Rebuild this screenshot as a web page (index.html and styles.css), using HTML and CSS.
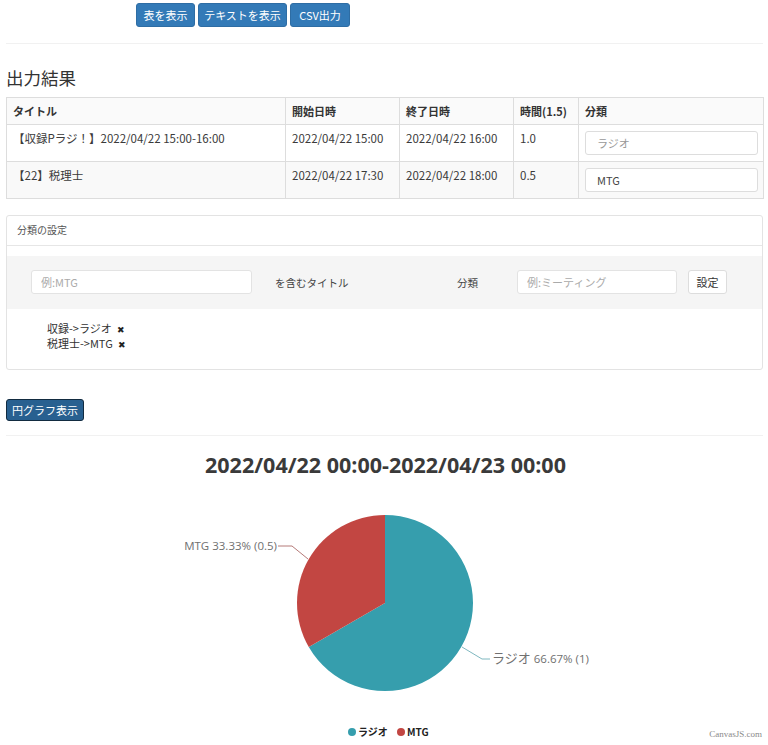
FILE: index.html
```html
<!DOCTYPE html>
<html lang="ja">
<head>
<meta charset="utf-8">
<title>出力結果</title>
<link rel="stylesheet" href="styles.css">
</head>
<body>
<div class="page">
  <div class="toolbar">
    <button class="btn btn-primary b-table">表を表示</button>
    <button class="btn btn-primary b-text">テキストを表示</button>
    <button class="btn btn-primary b-csv">CSV出力</button>
  </div>
  <hr class="rule">
  <h3 class="heading">出力結果</h3>
  <table class="result">
    <thead>
      <tr>
        <th class="c-title">タイトル</th>
        <th class="c-start">開始日時</th>
        <th class="c-end">終了日時</th>
        <th class="c-time">時間(1.5)</th>
        <th class="c-cat">分類</th>
      </tr>
    </thead>
    <tbody>
      <tr>
        <td>【収録Pラジ！】2022/04/22 15:00-16:00</td>
        <td>2022/04/22 15:00</td>
        <td>2022/04/22 16:00</td>
        <td>1.0</td>
        <td><input class="cell-input" type="text" placeholder="ラジオ"></td>
      </tr>
      <tr class="striped">
        <td>【22】税理士</td>
        <td>2022/04/22 17:30</td>
        <td>2022/04/22 18:00</td>
        <td>0.5</td>
        <td><input class="cell-input" type="text" value="MTG"></td>
      </tr>
    </tbody>
  </table>

  <div class="panel">
    <div class="panel-heading">分類の設定</div>
    <div class="panel-body">
      <div class="band">
        <input class="band-input key" type="text" placeholder="例:MTG">
        <span class="band-label contains">を含むタイトル</span>
        <span class="band-label cat">分類</span>
        <input class="band-input val" type="text" placeholder="例:ミーティング">
        <button class="btn btn-default">設定</button>
      </div>
      <ul class="rules">
        <li>収録-&gt;ラジオ <span class="x">✖</span></li>
        <li>税理士-&gt;MTG <span class="x">✖</span></li>
      </ul>
    </div>
  </div>

  <button class="btn btn-dark">円グラフ表示</button>
  <hr class="rule rule2">

  <svg class="chart" width="757" height="305" viewBox="0 0 757 305">
    <text class="chart-title" x="379.5" y="34" text-anchor="middle">2022/04/22 00:00-2022/04/23 00:00</text>
    <path d="M379,164 L379,76 A88,88 0 1,1 302.79,208 Z" fill="#369EAD"/>
    <path d="M379,164 L379,76 A88,88 0 0,0 302.79,208 Z" fill="#C24642"/>
    <polyline points="272,107 286,107 302,120" fill="none" stroke="#b57a78" stroke-width="1"/>
    <text class="plabel" x="271" y="111" text-anchor="end">MTG 33.33% (0.5)</text>
    <polyline points="456,208 476,220 484,220" fill="none" stroke="#7fb8c0" stroke-width="1"/>
    <text class="plabel" x="486" y="224"><tspan class="jp">ラジオ</tspan> 66.67% (1)</text>
    <circle cx="346" cy="293" r="4" fill="#369EAD"/>
    <text class="legend" x="352" y="297">ラジオ</text>
    <circle cx="395" cy="293" r="4" fill="#C24642"/>
    <text class="legend" x="401" y="297">MTG</text>
    <text class="credit" x="756" y="298" text-anchor="end">CanvasJS.com</text>
  </svg>
</div>
</body>
</html>
```
FILE: styles.css
```css
* { box-sizing: border-box; }
html, body { margin: 0; padding: 0; background: #fff; }
body {
  font-family: "Noto Sans CJK JP", "Noto Sans", sans-serif;
  color: #333;
  font-size: 12px;
}
.page { width: 768px; padding: 0 5px 0 6px; }

.toolbar { padding: 3px 0 0 130px; display: flex; gap: 3px; }
.btn {
  font-family: inherit;
  font-size: 11px;
  line-height: 1;
  border-radius: 3px;
  cursor: pointer;
  margin: 0;
}
.btn-primary {
  height: 24px;
  padding: 0;
  color: #fff;
  background: #337ab7;
  border: 1px solid #2e6da4;
  font-size: 11px;
}
.b-table { width: 59px; }
.b-text { width: 89px; }
.b-csv { width: 60px; }
.btn-default {
  height: 24px;
  width: 39px;
  padding: 0;
  color: #333;
  background: #fff;
  border: 1px solid #ddd;
}
.btn-dark {
  display: block;
  margin-top: 29px;
  height: 22px;
  width: 78px;
  padding: 0;
  color: #fff;
  background: #286090;
  border: 1px solid #122b40;
}

.rule { border: 0; border-top: 1px solid #f1f1f1; margin: 16px 0 0; }
.rule2 { margin-top: 14px; }

.heading {
  font-size: 17.5px;
  font-weight: 400;
  line-height: 19px;
  margin: 24px 0 10px;
  color: #333;
}

.result {
  width: 757px;
  border-collapse: collapse;
  table-layout: fixed;
}
.result th, .result td {
  border: 1px solid #ddd;
  padding: 6px 6px;
  text-align: left;
  vertical-align: top;
  line-height: 14px;
}
.result th { font-weight: 700; font-size: 11px; background: #fafafa; }
.result td { font-size: 11.5px; color: #3a3a3a; }
.result .striped td { background: #f9f9f9; }
.c-title { width: 279px; }
.c-start { width: 114px; }
.c-end { width: 114px; }
.c-time { width: 65px; }
.c-cat { width: 185px; }
.cell-input {
  display: block;
  width: 173px;
  height: 24px;
  border: 1px solid #ddd;
  border-radius: 3px;
  padding: 0 11px;
  font-family: inherit;
  font-size: 11px;
  color: #444;
  background: #fff;
}
.cell-input::placeholder { color: #999; }

.panel {
  margin-top: 16px;
  border: 1px solid #e3e3e3;
  border-radius: 3px;
}
.panel-heading {
  padding: 8px 10px;
  height: 30px;
  font-size: 10px;
  line-height: 12px;
  color: #555;
  border-bottom: 1px solid #e6e6e6;
}
.panel-body { padding: 10px 0 0; }
.band {
  background: #f5f5f5;
  padding: 14px 0 15px 24px;
  display: flex;
  align-items: center;
  height: 53px;
}
.band-input {
  height: 24px;
  border: 1px solid #e3e3e3;
  border-radius: 3px;
  padding: 0 9px;
  font-family: inherit;
  font-size: 11px;
  background: #fff;
}
.band-input::placeholder { color: #aaa; }
.key { width: 221px; }
.val { width: 160px; margin-right: 11px; }
.band-label { font-size: 10.5px; color: #444; }
.contains { margin-left: 23px; width: 182px; }
.cat { width: 60px; }

.rules {
  list-style: none;
  margin: 0;
  padding: 12px 0 18px 40px;
  font-size: 11px;
  color: #333;
}
.rules li { height: 15px; line-height: 15px; overflow: visible; }
.x { font-size: 9px; line-height: 1; color: #222; margin-left: 3px; }

.chart { display: block; margin-top: 3px; }
.chart-title {
  font-family: "Open Sans", sans-serif;
  font-weight: 700;
  font-size: 21.5px;
  fill: #3a3a3a;
}
.plabel {
  font-family: "Open Sans", "Noto Sans CJK JP", sans-serif;
  font-size: 11.5px;
  fill: #707070;
}
.plabel .jp { font-family: "Noto Sans CJK JP", sans-serif; font-size: 13px; }
.legend {
  font-family: "Noto Sans CJK JP", sans-serif;
  font-size: 10px;
  font-weight: 700;
  fill: #222;
}
.credit {
  font-family: "Liberation Serif", serif;
  font-size: 9px;
  fill: #8a8a8a;
}
```
